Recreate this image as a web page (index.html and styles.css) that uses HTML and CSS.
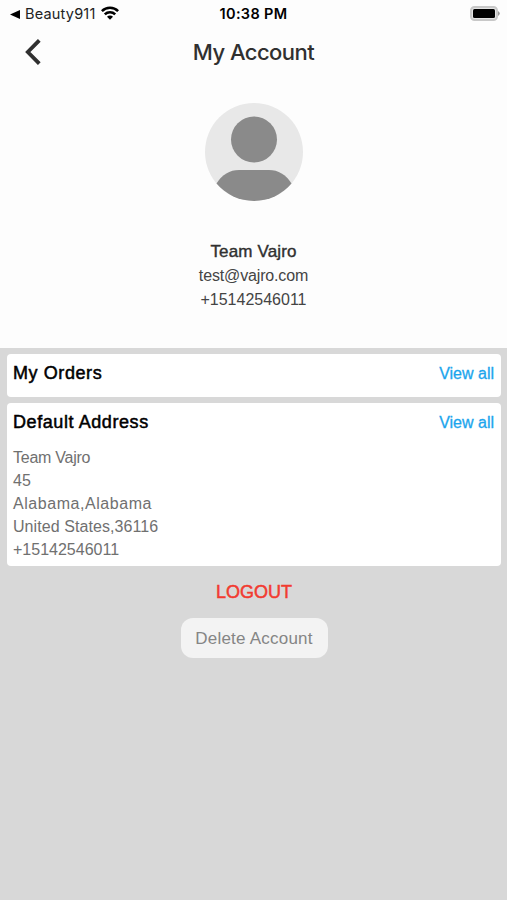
FILE: index.html
```html
<!DOCTYPE html>
<html lang="en">
<head>
    <meta charset="UTF-8">
    <meta name="viewport" content="width=device-width, initial-scale=1.0">
    <title>My Account</title>
    <link rel="stylesheet" href="styles.css">
</head>
<body>
    <div class="top">
        <div class="status-bar">
            <div class="status-left">
                <svg class="back-app" width="10" height="9" viewBox="0 0 10 9"><path d="M0 4.5 10 0v9z"/></svg>
                <span class="app-name">Beauty911</span>
                <svg class="wifi" width="18" height="14" viewBox="0 0 18 14" fill="none" stroke="#000" stroke-width="2.6">
                    <path d="M.9 5.1a11.6 11.6 0 0 1 16.2 0M3.8 8.4a7.5 7.5 0 0 1 10.4 0"/>
                    <path d="M9 13.8 6 10.8a4.2 4.2 0 0 1 6 0z" fill="#000" stroke="none"/>
                </svg>
            </div>
            <span class="time">10:38 PM</span>
            <svg class="battery" width="31" height="15" viewBox="0 0 31 15">
                <rect x="1" y="1" width="26" height="13" rx="3.5" fill="#e4e4e4" stroke="#c8c8c8" stroke-width="2"/>
                <path d="M28 5q3.6 2.5 0 5z" fill="#999"/>
                <rect x="3" y="3" width="22" height="9" rx="1.5"/>
            </svg>
        </div>

        <div class="nav-bar">
            <svg class="back" width="16" height="26" viewBox="0 0 16 26" fill="none" stroke="#303030" stroke-width="3.8">
                <path d="M14.3 1.3 2.8 13l11.5 11.7"/>
            </svg>
            <h1 class="title">My Account</h1>
        </div>

        <div class="profile">
            <svg class="avatar" width="98" height="98" viewBox="0 0 98 98">
                <circle cx="49" cy="49" r="49" fill="#e8e8e8"/>
                <circle cx="49" cy="36.5" r="23" fill="#8a8a8a"/>
                <path d="M11.5 80.5Q20 67 34 67h30q14 0 22.5 13.5A49 49 0 0 1 11.5 80.5z" fill="#8a8a8a"/>
            </svg>
            <div class="name">Team Vajro</div>
            <div class="contact email">test@vajro.com</div>
            <div class="contact phone">+15142546011</div>
        </div>
    </div>

    <div class="content">
        <div class="card orders">
            <div class="card-header">
                <h2 class="card-title">My Orders</h2>
                <a class="view-all">View all</a>
            </div>
        </div>

        <div class="card address">
            <div class="card-header">
                <h2 class="card-title">Default Address</h2>
                <a class="view-all">View all</a>
            </div>
            <div class="address-lines">
                <div class="recipient">Team Vajro</div>
                <div>45</div>
                <div class="region">Alabama,Alabama</div>
                <div class="country">United States,36116</div>
                <div>+15142546011</div>
            </div>
        </div>

        <button type="button" class="logout">LOGOUT</button>
        <button type="button" class="delete-btn">Delete Account</button>
    </div>
</body>
</html>
```

FILE: styles.css
```css
* {
    margin: 0;
    padding: 0;
    box-sizing: border-box;
}

body {
    font-family: "Liberation Sans", Arial, sans-serif;
    background: #d8d8d8;
    height: 900px;
    overflow: hidden;
}

.top {
    height: 348px;
    background: #fdfdfd;
}

.status-bar {
    display: grid;
    grid-template-columns: 1fr auto 1fr;
    align-items: center;
    height: 28px;
    padding: 0 6px;
    font-family: Inter, sans-serif;
    line-height: 28px;
}

.status-left {
    display: flex;
    align-items: center;
    padding-left: 4px;
}

.app-name {
    margin-left: 5px;
    font-size: 14.5px;
    letter-spacing: 0.2px;
    color: #222;
}

.wifi {
    margin-left: 5px;
    margin-top: -3px;
}

.time {
    font-size: 14.5px;
    font-weight: 600;
    letter-spacing: 0.35px;
}

.battery {
    justify-self: end;
    margin-top: -2px;
}

.nav-bar {
    display: grid;
    grid-template-columns: 1fr auto 1fr;
    align-items: center;
    height: 48px;
    padding: 0 25px;
}

.title {
    font-family: Inter, sans-serif;
    font-size: 22px;
    font-weight: 500;
    letter-spacing: -0.55px;
    color: #303030;
}

.profile {
    display: flex;
    flex-direction: column;
    align-items: center;
    padding-top: 27px;
}

.name {
    margin-top: 38px;
    font-size: 17px;
    line-height: 25px;
    letter-spacing: 0.15px;
    color: #303030;
    -webkit-text-stroke: 0.4px #303030;
}

.contact {
    font-size: 16px;
    line-height: 24px;
    color: #444;
}

.email {
    letter-spacing: -0.15px;
}

.content {
    display: flex;
    flex-direction: column;
    align-items: center;
    gap: 6px;
    padding: 6px 6px 0 7px;
}

.card {
    width: 100%;
    padding: 0 7px 0 6px;
    background: #fff;
    border-radius: 4px;
}

.orders {
    height: 43px;
}

.address {
    height: 163px;
}

.card-header {
    display: flex;
    align-items: center;
    justify-content: space-between;
    height: 39px;
}

.card-title {
    font-size: 18px;
    font-weight: normal;
    letter-spacing: 0.58px;
    color: #000;
    -webkit-text-stroke: 0.5px #000;
}

.view-all {
    font-size: 16px;
    color: #1ba5ed;
    -webkit-text-stroke: 0.3px #1ba5ed;
}

.address-lines {
    padding-top: 4px;
    font-size: 16px;
    line-height: 23px;
    color: #707070;
}

.recipient {
    letter-spacing: -0.25px;
}

.region {
    letter-spacing: 0.55px;
}

.country {
    letter-spacing: 0.07px;
}

.logout {
    margin-top: 6px;
    border: none;
    background: none;
    font-family: inherit;
    font-size: 18px;
    line-height: 28px;
    color: #f23b30;
    -webkit-text-stroke: 0.5px #f23b30;
}

.delete-btn {
    width: 147px;
    height: 40px;
    margin-top: 6px;
    padding-top: 1px;
    border: none;
    border-radius: 12px;
    background: #f3f3f3;
    font-family: inherit;
    font-size: 17px;
    letter-spacing: 0.22px;
    color: #858585;
}
```
